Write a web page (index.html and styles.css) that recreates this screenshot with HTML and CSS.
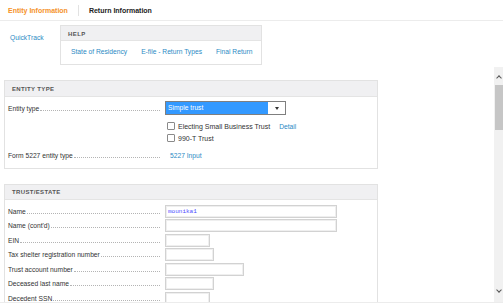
FILE: index.html
```html
<!DOCTYPE html>
<html lang="en">
<head>
  <meta charset="UTF-8" />
  <title>Entity Information</title>
  <link rel="stylesheet" href="styles.css">
</head>
<body>
  <div class="tabs">
    <span class="tab active">Entity Information</span>
    <span class="tab-sep"></span>
    <span class="tab">Return Information</span>
  </div>

  <div class="top">
    <a class="link quicktrack">QuickTrack</a>
    <div class="help">
      <div class="help-head">HELP</div>
      <div class="help-links">
        <a class="link">State of Residency</a>
        <a class="link">E-file - Return Types</a>
        <a class="link">Final Return</a>
      </div>
    </div>
  </div>

  <div class="main">
    <div class="content">
      <div class="section entity">
        <div class="section-head">ENTITY TYPE</div>
        <div class="section-body">
          <div class="row select-row">
            <div class="label"><span>Entity type</span><span class="dots"></span></div>
            <div class="select">
              <span class="select-value">Simple trust</span>
              <span class="select-btn"><span class="caret"></span></span>
            </div>
          </div>
          <div class="check-row">
            <span class="box"></span><span>Electing Small Business Trust</span>
            <a class="link detail">Detail</a>
          </div>
          <div class="check-row">
            <span class="box"></span><span>990-T Trust</span>
          </div>
          <div class="row form-row">
            <div class="label"><span>Form 5227 entity type</span><span class="dots"></span></div>
            <a class="link input-link">5227 Input</a>
          </div>
        </div>
      </div>

      <div class="section trust">
        <div class="section-head">TRUST/ESTATE</div>
        <div class="section-body">
          <div class="row field-row">
            <div class="label"><span>Name</span><span class="dots"></span></div>
            <div class="input w-name">mounika1</div>
          </div>
          <div class="row field-row">
            <div class="label"><span>Name (cont'd)</span><span class="dots"></span></div>
            <div class="input w-name"></div>
          </div>
          <div class="row field-row">
            <div class="label"><span>EIN</span><span class="dots"></span></div>
            <div class="input w-ein"></div>
          </div>
          <div class="row field-row">
            <div class="label"><span>Tax shelter registration number</span><span class="dots"></span></div>
            <div class="input w-mid"></div>
          </div>
          <div class="row field-row">
            <div class="label"><span>Trust account number</span><span class="dots"></span></div>
            <div class="input w-acct"></div>
          </div>
          <div class="row field-row">
            <div class="label"><span>Deceased last name</span><span class="dots"></span></div>
            <div class="input w-mid"></div>
          </div>
          <div class="row field-row">
            <div class="label"><span>Decedent SSN</span><span class="dots"></span></div>
            <div class="input w-ein"></div>
          </div>
        </div>
      </div>
    </div>

    <div class="scrollbar">
      <span class="arrow up"></span>
      <span class="thumb"></span>
      <span class="track"></span>
      <span class="arrow down"></span>
    </div>
  </div>
</body>
</html>
```

FILE: styles.css
```css
* {
  box-sizing: border-box;
  margin: 0;
  padding: 0;
}
html, body {
  height: 100%;
  overflow: hidden;
}
body {
  font-family: 'Liberation Sans', Arial, sans-serif;
  font-size: 6.7px;
  color: #333;
  background: #fff;
  display: flex;
  flex-direction: column;
}
.link {
  color: #2b8ac4;
}

/* tabs */
.tabs {
  height: 21px;
  display: flex;
  align-items: center;
  padding-left: 8px;
  border-bottom: 1px solid #ececec;
  flex-shrink: 0;
}
.tab {
  font-size: 7px;
  font-weight: bold;
  color: #222;
}
.tab.active {
  color: #f5922a;
}
.tab-sep {
  width: 1px;
  height: 11px;
  background: #e2e2e2;
  margin: 0 10px;
}

/* help */
.top {
  display: flex;
  align-items: flex-start;
  padding: 4px 0 0 10px;
  height: 46px;
  flex-shrink: 0;
}
.quicktrack {
  margin-top: 9px;
  width: 50px;
}
.help {
  width: 202px;
  height: 40px;
  border: 1px solid #e2e2e2;
}
.help-head {
  height: 15px;
  background: #f0f0f2;
  border-bottom: 1px solid #e4e4e4;
  padding-left: 7px;
  line-height: 16px;
  font-size: 6px;
  font-weight: bold;
  letter-spacing: 0.4px;
  color: #555;
}
.help-links {
  display: flex;
  gap: 14px;
  padding: 7px 0 0 10px;
}

/* main scroll area */
.main {
  flex: 1;
  display: flex;
  min-height: 0;
  border-bottom: 1px solid #ececec;
}
.content {
  flex: 1;
  overflow: hidden;
  padding: 13px 0 0 4px;
}
.section {
  width: 374px;
  border: 1px solid #e2e2e2;
}
.section + .section {
  margin-top: 15px;
}
.section-head {
  height: 16px;
  line-height: 16px;
  background: #f0f0f2;
  border-bottom: 1px solid #e4e4e4;
  padding-left: 7px;
  font-size: 6px;
  font-weight: bold;
  letter-spacing: 0.35px;
  color: #555;
}
.trust .section-head {
  height: 15px;
  line-height: 14px;
}
.section-body {
  padding: 3px 0 0 3px;
}
.entity .section-body {
  height: 71px;
}
.row {
  display: flex;
  align-items: center;
}
.label {
  width: 157px;
  display: flex;
  align-items: baseline;
  padding-right: 5px;
  white-space: nowrap;
}
.dots {
  flex: 1;
  border-bottom: 1px dotted #b4b4b4;
  margin-left: 1px;
}

/* entity type */
.select-row {
  height: 16px;
}
.select {
  width: 121px;
  height: 14px;
  display: flex;
  border: 1px solid #7f7f7f;
}
.select-value {
  flex: 1;
  background: #3399ff;
  color: #fff;
  line-height: 12px;
  padding-left: 2px;
}
.select-btn {
  width: 17px;
  display: flex;
  align-items: center;
  justify-content: center;
}
.caret {
  border-left: 2.5px solid transparent;
  border-right: 2.5px solid transparent;
  border-top: 3px solid #333;
}
.check-row {
  display: flex;
  align-items: center;
  height: 12px;
  padding-left: 159px;
  font-size: 7px;
}
.select-row + .check-row {
  margin-top: 4px;
}
.box {
  width: 8px;
  height: 8px;
  border: 1px solid #8a8a8a;
  border-radius: 1px;
  margin-right: 3px;
}
.detail {
  margin-left: 9px;
  font-size: 6.7px;
}
.form-row {
  height: 12px;
  margin-top: 5px;
}
.input-link {
  padding-left: 5px;
}

/* trust / estate */
.trust .section-body {
  padding-top: 4px;
  height: 130px;
}
.field-row {
  height: 14.5px;
}
.input {
  height: 13px;
  border: 1px solid #d2d2d2;
  box-shadow: inset 0 0 0 1px #efefef;
  font-family: 'Liberation Mono', 'DejaVu Sans Mono', monospace;
  font-size: 6px;
  color: #4a4aff;
  line-height: 11px;
  padding-left: 2px;
}
.w-name { width: 172px; }
.w-ein { width: 45px; }
.w-mid { width: 49px; }
.w-acct { width: 79px; }

/* scrollbar */
.scrollbar {
  width: 9px;
  background: #f1f1f1;
  display: flex;
  flex-direction: column;
  align-items: center;
}
.arrow {
  width: 4px;
  height: 4px;
  border-left: 1px solid #555;
  border-top: 1px solid #555;
}
.arrow.up {
  transform: rotate(45deg);
  margin-top: 9px;
}
.arrow.down {
  transform: rotate(225deg);
  margin-bottom: 10px;
}
.thumb {
  width: 8px;
  height: 45px;
  background: #c6c6c6;
  margin-top: 5px;
}
.track {
  flex: 1;
}
```
